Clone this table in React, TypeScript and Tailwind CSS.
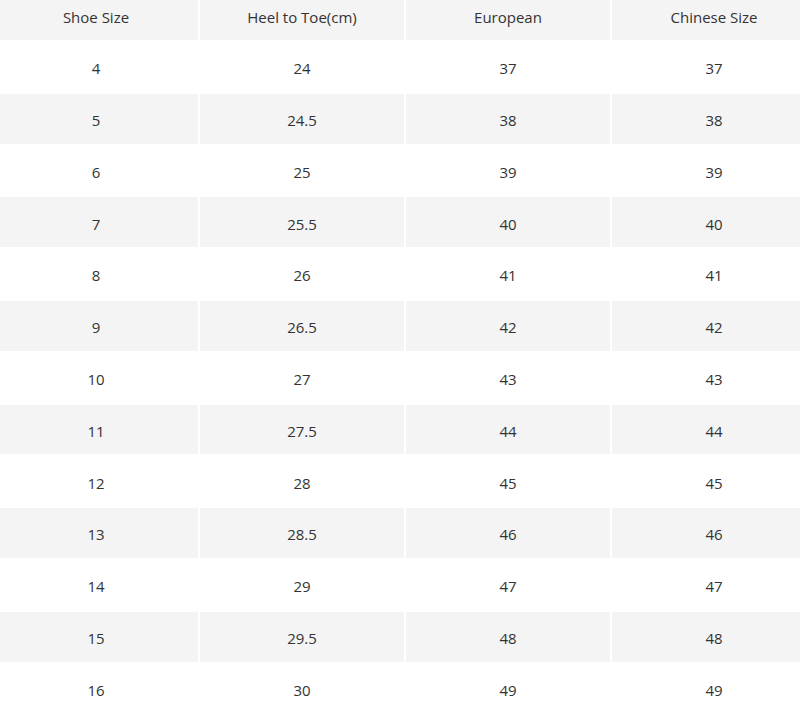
import React from "react";

const rows: [string, string, string, string][] = [
  ["4", "24", "37", "37"],
  ["5", "24.5", "38", "38"],
  ["6", "25", "39", "39"],
  ["7", "25.5", "40", "40"],
  ["8", "26", "41", "41"],
  ["9", "26.5", "42", "42"],
  ["10", "27", "43", "43"],
  ["11", "27.5", "44", "44"],
  ["12", "28", "45", "45"],
  ["13", "28.5", "46", "46"],
  ["14", "29", "47", "47"],
  ["15", "29.5", "48", "48"],
  ["16", "30", "49", "49"],
];

const headers = ["Shoe Size", "Heel to Toe(cm)", "European", "Chinese Size"];

export default function App() {
  return (
    <div
      className="w-[800px] h-[710px] overflow-hidden bg-white text-[15px] text-[#333333]"
      style={{ fontFamily: '"Open Sans", "Noto Sans", sans-serif' }}
    >
      <div className="ml-[-6px] grid grid-cols-[204px_204px_204px_204px] gap-[2px]">
        {headers.map((h) => (
          <div
            key={h}
            className="h-[40px] bg-[#f4f4f4] flex items-center justify-center pb-[5px]"
          >
            {h}
          </div>
        ))}
        {rows.map((r, i) =>
          r.map((c, j) => (
            <div
              key={`${i}-${j}`}
              className={`h-[49.8px] flex items-center justify-center pt-[3px] ${
                i % 2 === 1 ? "bg-[#f4f4f4]" : "bg-white"
              }`}
            >
              {c}
            </div>
          ))
        )}
      </div>
    </div>
  );
}
